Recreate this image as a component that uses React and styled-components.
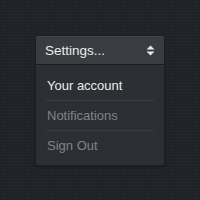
import React from "react";
import styled, { createGlobalStyle } from "styled-components";

const Global = createGlobalStyle`
  html, body { margin: 0; padding: 0; }
  body {
    width: 200px; height: 200px;
    background-color: #23272b;
    background-image:
      radial-gradient(circle at 1px 1px, rgba(0,0,0,0.14) 0.7px, transparent 1px);
    background-size: 3px 3px;
    font-family: "Liberation Sans", Arial, sans-serif;
  }
`;

const Stage = styled.div`
  width: 200px;
  height: 200px;
  display: flex;
  justify-content: center;
  padding-top: 35px;
  box-sizing: border-box;
`;

const Dropdown = styled.div`
  width: 130px;
  display: flex;
  flex-direction: column;
`;

const Toggle = styled.button`
  height: 30px;
  box-sizing: border-box;
  display: flex;
  align-items: center;
  justify-content: space-between;
  padding: 0 9px 0 9px;
  background: #393c40;
  border: 1px solid #1c1f22;
  border-radius: 3px 3px 0 0;
  color: #ececec;
  font-family: "Liberation Sans", Arial, sans-serif;
  font-size: 13.5px;
  cursor: pointer;
  box-shadow: inset 0 1px 0 rgba(255,255,255,0.05);
`;

const Menu = styled.ul`
  list-style: none;
  margin: 0;
  padding: 5px 10px 5px 10px;
  background: rgba(45, 48, 52, 0.94);
  border: 1px solid #1f2225;
  border-top: none;
  border-radius: 0 0 3px 3px;
  box-shadow: 0 1px 3px rgba(0,0,0,0.35);
`;

const Item = styled.li`
  height: 30px;
  display: flex;
  align-items: center;
  padding-left: 1px;
  font-size: 13px;
  color: ${(p) => (p.$active ? "#ebebeb" : "#818488")};
  border-top: ${(p) => (p.$first ? "none" : "1px solid #393c40")};
  box-sizing: border-box;
`;

const Arrows = () => (
  <svg width="9" height="11" viewBox="0 0 9 11">
    <path d="M4.5 0.5 L8.5 4.5 L0.5 4.5 Z" fill="#e8e8e8" />
    <path d="M4.5 10.5 L8.5 6.5 L0.5 6.5 Z" fill="#e8e8e8" />
  </svg>
);

export default function App() {
  return (
    <>
      <Global />
      <Stage>
        <Dropdown>
          <Toggle>
            <span>Settings...</span>
            <Arrows />
          </Toggle>
          <Menu>
            <Item $first $active>Your account</Item>
            <Item>Notifications</Item>
            <Item>Sign Out</Item>
          </Menu>
        </Dropdown>
      </Stage>
    </>
  );
}
